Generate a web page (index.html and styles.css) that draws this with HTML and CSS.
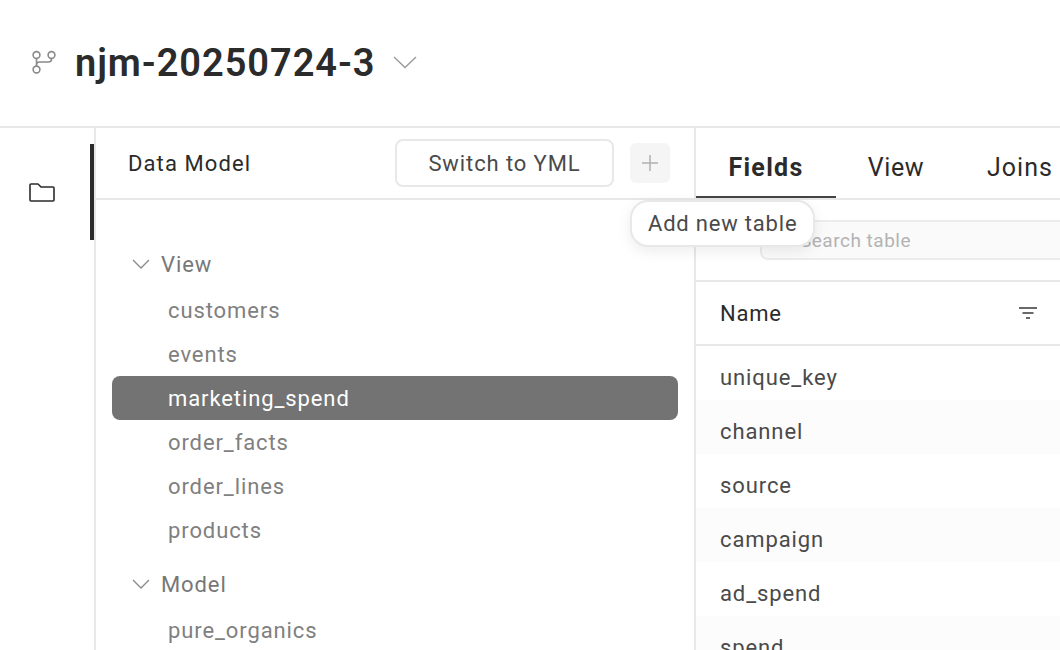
FILE: index.html
```html
<!DOCTYPE html>
<html lang="en">
<head>
  <meta charset="UTF-8">
  <title>Data Model</title>
  <link rel="stylesheet" href="styles.css">
</head>
<body>

  <header class="topbar">
    <svg class="branch-icon" width="28" height="28" viewBox="0 0 28 28" fill="none" stroke="#8a8a8a" stroke-width="1.6">
      <circle cx="6.500" cy="6" r="3.400"/>
      <circle cx="6.500" cy="20.500" r="3.400"/>
      <circle cx="21.500" cy="6" r="3.400"/>
      <path d="M6.500 9.400v7.700M21.500 9.400v.6a3 3 0 0 1-3 3h-9a3 3 0 0 0-3 3"/>
    </svg>
    <h1>njm-20250724-3</h1>
    <svg class="title-caret" width="24" height="24" viewBox="0 0 24 24" fill="none" stroke="#9a9a9a" stroke-width="1.4">
      <path d="M1 6l11 10.500L23 6"/>
    </svg>
  </header>

  <div class="workspace">
    <nav class="rail">
      <div class="rail-item">
        <svg width="28" height="24" viewBox="0 0 28 24" fill="none" stroke="#2b2b2b" stroke-width="1.6" stroke-linejoin="round">
          <path d="M2 5a1 1 0 0 1 1-1h7l3 3h12a1 1 0 0 1 1 1v12a1 1 0 0 1-1 1H3a1 1 0 0 1-1-1z"/>
        </svg>
      </div>
    </nav>

    <section class="model-panel">
      <div class="panel-head">
        <span class="panel-title">Data Model</span>
        <button class="switch-btn">Switch to YML</button>
        <button class="add-btn">
          <svg width="18" height="18" viewBox="0 0 18 18" stroke="#b0b0b0" stroke-width="1.5">
            <path d="M9 1v16M1 9h16"/>
          </svg>
        </button>
        <div class="tooltip">Add new table</div>
      </div>

      <div class="tree">
        <div class="group">
          <svg width="18" height="10" viewBox="0 0 18 10" fill="none" stroke="#8a8a8a" stroke-width="1.3"><path d="M1 1l8 8 8-8"/></svg>
          View
        </div>
        <div class="item">customers</div>
        <div class="item">events</div>
        <div class="item selected">marketing_spend</div>
        <div class="item">order_facts</div>
        <div class="item">order_lines</div>
        <div class="item">products</div>
        <div class="group group-model">
          <svg width="18" height="10" viewBox="0 0 18 10" fill="none" stroke="#8a8a8a" stroke-width="1.3"><path d="M1 1l8 8 8-8"/></svg>
          Model
        </div>
        <div class="item">pure_organics</div>
      </div>
    </section>

    <section class="fields-panel">
      <div class="tabs">
        <div class="tab active">Fields</div>
        <div class="tab tab-view">View</div>
        <div class="tab tab-joins">Joins</div>
      </div>
      <div class="search-wrap">
        <div class="search">Search table</div>
      </div>
      <div class="name-head">
        <span>Name</span>
        <svg width="20" height="14" viewBox="0 0 20 14" stroke="#3a3a3a" stroke-width="1.6">
          <path d="M1 2h18M4.500 7h11M8 12h4"/>
        </svg>
      </div>
      <div class="row">unique_key</div>
      <div class="row">channel</div>
      <div class="row">source</div>
      <div class="row">campaign</div>
      <div class="row">ad_spend</div>
      <div class="row">spend</div>
    </section>
  </div>

</body>
</html>
```

FILE: styles.css
```css
* {
  box-sizing: border-box;
}

html, body {
  height: 100%;
}

body {
  margin: 0;
  overflow: hidden;
  background: #ffffff;
  color: #2b2b2b;
  font-family: 'Roboto', sans-serif;
}

.topbar {
  display: flex;
  align-items: center;
  height: 128px;
  padding-left: 30px;
  border-bottom: 2px solid #e8e8e8;
}

.branch-icon {
  flex: none;
}

.topbar h1 {
  margin: 0 0 0 17px;
  font-size: 38px;
  font-weight: 600;
  letter-spacing: 0.95px;
  color: #2b2b2b;
}

.title-caret {
  margin-left: 17px;
}

.workspace {
  display: flex;
  height: 522px;
}

.rail {
  flex: none;
  width: 96px;
  padding-top: 16px;
  border-right: 2px solid #e8e8e8;
}

.rail-item {
  display: flex;
  align-items: center;
  justify-content: center;
  width: 94px;
  height: 96px;
  padding-right: 6px;
  border-right: 4px solid #2b2b2b;
}

.model-panel {
  flex: none;
  width: 600px;
  border-right: 2px solid #e8e8e8;
}

.panel-head {
  position: relative;
  display: flex;
  align-items: center;
  height: 72px;
  padding: 0 24px 0 32px;
  border-bottom: 2px solid #e8e8e8;
}

.panel-title {
  flex: 1;
  font-size: 22px;
  letter-spacing: 1.1px;
}

.switch-btn {
  width: 219px;
  height: 48px;
  border: 2px solid #e8e8e8;
  border-radius: 8px;
  background: #ffffff;
  color: #4a4a4a;
  font-family: inherit;
  font-size: 22px;
  letter-spacing: 0.9px;
}

.add-btn {
  display: flex;
  align-items: center;
  justify-content: center;
  width: 40px;
  height: 40px;
  margin-left: 16px;
  padding: 0;
  border: none;
  border-radius: 6px;
  background: #f5f5f5;
}

.tooltip {
  position: absolute;
  left: 534px;
  top: 72px;
  z-index: 2;
  padding: 9px 16px;
  border: 2px solid #e8e8e8;
  border-radius: 18px;
  background: #ffffff;
  color: #4a4a4a;
  font-size: 22px;
  letter-spacing: 0.8px;
  white-space: nowrap;
  box-shadow: 0 4px 14px rgba(0, 0, 0, 0.08);
}

.tree {
  padding: 42px 16px 0;
}

.group {
  display: flex;
  align-items: center;
  gap: 11px;
  height: 44px;
  padding-left: 20px;
  color: #777777;
  font-size: 22px;
  letter-spacing: 0.9px;
}

.group-model {
  margin-top: 10px;
}

.item {
  height: 44px;
  padding-left: 56px;
  line-height: 46px;
  color: #808080;
  font-size: 22px;
  letter-spacing: 0.9px;
}

.group + .item {
  margin-top: 2px;
}

.selected {
  border-radius: 8px;
  background: #737373;
  color: #ffffff;
}

.fields-panel {
  flex: 1;
  min-width: 0;
}

.tabs {
  display: flex;
  height: 72px;
  border-bottom: 2px solid #e8e8e8;
  white-space: nowrap;
}

.tab {
  flex: none;
  width: 140px;
  height: 70px;
  padding-top: 25px;
  text-align: center;
  color: #2b2b2b;
  font-size: 25px;
  letter-spacing: 1px;
}

.tab.active {
  border-bottom: 2px solid #444444;
  font-weight: 700;
  letter-spacing: 1.3px;
}

.tab-view {
  width: 120px;
  letter-spacing: 0.6px;
}

.tab-joins {
  padding-left: 31px;
  text-align: left;
}

.search-wrap {
  height: 82px;
  padding: 20px 0 0 64px;
  border-bottom: 2px solid #e8e8e8;
}

.search {
  height: 40px;
  padding: 7px 0 0 38px;
  border: 2px solid #ececec;
  border-right: none;
  border-radius: 8px 0 0 8px;
  background: #fafafa;
  color: #b3b3b3;
  font-size: 19px;
  letter-spacing: 0.5px;
}

.name-head {
  display: flex;
  align-items: center;
  justify-content: space-between;
  height: 64px;
  padding: 0 22px 0 24px;
  border-bottom: 2px solid #e8e8e8;
  font-size: 22px;
  letter-spacing: 0.8px;
}

.row {
  height: 54px;
  padding-left: 24px;
  line-height: 63px;
  color: #4a4a4a;
  font-size: 22px;
  letter-spacing: 0.9px;
}

.row:nth-child(odd) {
  background: #fcfcfc;
}
```
